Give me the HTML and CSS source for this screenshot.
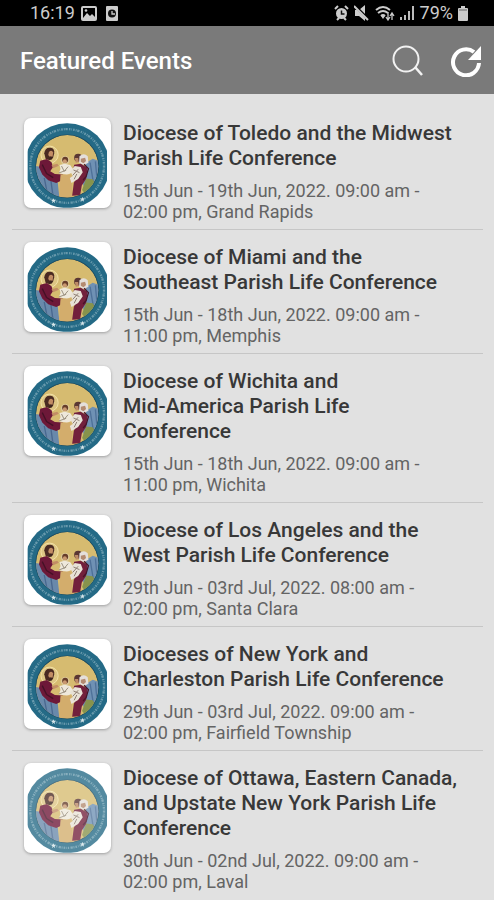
FILE: index.html
```html
<!DOCTYPE html>
<html lang="en">
<head>
<meta charset="utf-8">
<meta name="viewport" content="width=device-width, initial-scale=1">
<title>Featured Events</title>
<link rel="stylesheet" href="styles.css">
</head>
<body>
<svg class="defs" aria-hidden="true">
  <symbol id="seal" viewBox="27 24 262 270">
    <clipPath id="card"><rect x="38" y="24" width="239" height="270"/></clipPath>
    <clipPath id="disc"><circle cx="157" cy="169" r="94"/></clipPath>
    <g clip-path="url(#card)">
      <circle cx="157" cy="167" r="128" fill="#246a86"/>
      <circle cx="157" cy="168" r="111" fill="none" stroke="#a9c8d2" stroke-width="7" stroke-dasharray="5 3 3 2 7 4 4 3 2 3" opacity=".5"/>
      <circle cx="157" cy="169" r="96" fill="#1d4d62"/>
      <g clip-path="url(#disc)">
        <circle cx="157" cy="169" r="94" fill="#d6bb70"/>
        <path d="M62 168l22 4 20 24 24 16 6 55H80L55 220z" fill="#6989ab"/>
        <path d="M88 204l10 50M108 212l6 44" stroke="#49688f" stroke-width="4"/>
        <path d="M214 158l20-12 28 10v75l-44 30-14-40z" fill="#6f91b4"/>
        <path d="M226 158l10 60M242 154l4 44" stroke="#4f7199" stroke-width="4"/>
        <path d="M214 206l20 2 12 20-32 28-12-16z" fill="#87934c"/>
        <circle cx="104" cy="134" r="26" fill="#ddc684" stroke="#f3e2a8" stroke-width="3"/>
        <path d="M88 130q2-19 19-17 13 2 11 17l-4 15-10 6-12-5z" fill="#4a2a22"/>
        <path d="M102 126q8-8 13 1l-2 13-8 2-5-7z" fill="#c28d65"/>
        <path d="M104 139l9 1-3 9-7-1z" fill="#3d241d"/>
        <path d="M76 152l20-5 14 10 4 15-8 12 14 8 24 2-2 17-18 8-24-8-18-17-10-22z" fill="#6d1838"/>
        <path d="M82 164l13 27 20 12" fill="none" stroke="#451126" stroke-width="4"/>
        <path d="M110 166l17-5 5 6-17 8z" fill="#c28d65"/>
        <circle cx="151" cy="151" r="13" fill="#dcc998"/>
        <circle cx="151" cy="149" r="9" fill="#653c2a"/>
        <circle cx="150" cy="154" r="6" fill="#c99870"/>
        <path d="M134 165l15-4 17 4 8 12-6 13-12 5-24-5 5-13z" fill="#eee8db"/>
        <path d="M140 168l8 16 12-14m-28 19 22-8" fill="none" stroke="#9b9180" stroke-width="3"/>
        <path d="M137 194h32l5 70h-42z" fill="#d3ad6c"/>
        <circle cx="190" cy="143" r="12" fill="#5a3733"/>
        <path d="M180 144h10l2 12-9 2z" fill="#bd8b66"/>
        <path d="M194 139q13-12 25 0l2 19-14 8-14-8z" fill="#e4dfdb"/>
        <path d="M198 146l13-3 3 10-8 7-8-5z" fill="#b38a70"/>
        <path d="M178 164l20-3 20 12-4 34-13 20-5 29-24 2 5-39 10-22-14-8z" fill="#72203c"/>
        <path d="M166 184l14-16 18 3 6 16-14 20-20 12-5-15 9-6z" fill="#e8e2d7"/>
        <path d="M176 180l18 8m-20 8 16-18m-12 30 8-16" stroke="#8e7e72" stroke-width="3"/>
        <path d="M208 163l13 13-7 24-9 10" fill="none" stroke="#461328" stroke-width="4"/>
      </g>
      <path d="M116 265l2 5h6l-5 4 2 6-5-4-5 4 2-6-5-4h6zM203 261l2 5h6l-5 4 2 6-5-4-5 4 2-6-5-4h6z" fill="#d5e4e8"/>
    </g>
  </symbol>
</svg>

<div class="status">
  <span class="time">16:19</span>
  <svg class="s-photo" width="16" height="15" viewBox="0 0 16 15"><rect x="1" y="1" width="14" height="13" rx="1" fill="none" stroke="#ccc" stroke-width="2"/><path d="M2 12l4-5 3 3 2-2 4 4v2H2z" fill="#ccc"/><circle cx="5" cy="4.500" r="1.300" fill="#ccc"/></svg>
  <svg class="s-clock" width="12" height="15" viewBox="0 0 12 15"><rect width="12" height="15" rx="1" fill="#ccc"/><circle cx="6" cy="7.500" r="4" fill="#111"/><path d="M6 5v3h3" fill="none" stroke="#ccc" stroke-width="1.300"/></svg>
  <span class="spacer"></span>
  <svg width="15" height="16" viewBox="0 0 15 16"><path d="M1 4l3-3M14 4l-3-3M3 15l2-2M12 15l-2-2" stroke="#ccc" stroke-width="2"/><circle cx="7.500" cy="8.500" r="5.500" fill="#ccc"/><path d="M7.500 5.500v3.500h3" fill="none" stroke="#111" stroke-width="1.500"/></svg>
  <svg width="16" height="16" viewBox="0 0 16 16"><path d="M1 5h4l6-5v16l-6-5H1z" fill="#ccc"/><path d="M1 1l14 14" stroke="#000" stroke-width="3"/><path d="M0 1l14 14" stroke="#ccc" stroke-width="2"/></svg>
  <svg width="20" height="16" viewBox="0 0 20 16"><path d="M1 5q7-6 14 0M3 8q5-4 10 0M6 11q2-2 4 0" fill="none" stroke="#ccc" stroke-width="2"/><path d="M6 11h4l-2 3z" fill="#ccc"/><path d="M13 7v7m-2-2 2 3 2-3M17 15V9m-2 2 2-3 2 3" fill="none" stroke="#ccc" stroke-width="1.300"/></svg>
  <svg width="15" height="14" viewBox="0 0 15 14"><path d="M1 14v-3M5 14V9M9 14V5M13 14V0" stroke="#bbb" stroke-width="2"/></svg>
  <span class="pct">79%</span>
  <svg width="10" height="15" viewBox="0 0 10 15"><path d="M3 0h4v2h2q1 0 1 1v11q0 1-1 1H1q-1 0-1-1V3q0-1 1-1h2z" fill="#ccc"/><path d="M1 4h8" stroke="#666" stroke-width="1"/></svg>
</div>

<header class="bar">
  <h1>Featured Events</h1>
  <button type="button" aria-label="Search"><svg width="32" height="32" viewBox="0 0 32 32"><circle cx="14" cy="14" r="12.500" fill="none" stroke="#f2f2f2" stroke-width="2"/><path d="M23 22l7 8" stroke="#f2f2f2" stroke-width="2.500"/></svg></button>
  <button type="button" aria-label="Refresh"><svg width="32" height="32" viewBox="0 0 32 32"><path d="M29 18A13 13 0 1 1 24 7" fill="none" stroke="#fff" stroke-width="4"/><path d="M31 1v14H18z" fill="#fff"/></svg></button>
</header>

<main>
  <ul class="events">
    <li>
      <svg class="logo" role="img" aria-label="Seal"><use href="#seal"/></svg>
      <div><h2>Diocese of Toledo and the Midwest<br>Parish Life Conference</h2>
      <p>15th Jun - 19th Jun, 2022. 09:00 am -<br>02:00 pm, Grand Rapids</p></div>
    </li>
    <li>
      <svg class="logo" role="img" aria-label="Seal"><use href="#seal"/></svg>
      <div><h2>Diocese of Miami and the<br>Southeast Parish Life Conference</h2>
      <p>15th Jun - 18th Jun, 2022. 09:00 am -<br>11:00 pm, Memphis</p></div>
    </li>
    <li>
      <svg class="logo" role="img" aria-label="Seal"><use href="#seal"/></svg>
      <div><h2>Diocese of Wichita and<br>Mid-America Parish Life<br>Conference</h2>
      <p>15th Jun - 18th Jun, 2022. 09:00 am -<br>11:00 pm, Wichita</p></div>
    </li>
    <li>
      <svg class="logo" role="img" aria-label="Seal"><use href="#seal"/></svg>
      <div><h2>Diocese of Los Angeles and the<br>West Parish Life Conference</h2>
      <p>29th Jun - 03rd Jul, 2022. 08:00 am -<br>02:00 pm, Santa Clara</p></div>
    </li>
    <li>
      <svg class="logo" role="img" aria-label="Seal"><use href="#seal"/></svg>
      <div><h2>Dioceses of New York and<br>Charleston Parish Life Conference</h2>
      <p>29th Jun - 03rd Jul, 2022. 09:00 am -<br>02:00 pm, Fairfield Township</p></div>
    </li>
    <li>
      <svg class="logo loading" role="img" aria-label="Seal"><use href="#seal"/></svg>
      <div><h2>Diocese of Ottawa, Eastern Canada,<br>and Upstate New York Parish Life<br>Conference</h2>
      <p>30th Jun - 02nd Jul, 2022. 09:00 am -<br>02:00 pm, Laval</p></div>
    </li>
  </ul>
</main>
</body>
</html>
```
FILE: styles.css
```css
* { box-sizing: border-box; }
body {
  margin: 0;
  background: #e1e1e1;
  color: #383838;
  font-family: Roboto, "Liberation Sans", sans-serif;
}
h1, h2, p, ul { margin: 0; padding: 0; }
.defs { position: absolute; width: 0; height: 0; }

.status {
  display: flex;
  align-items: center;
  gap: 5px;
  height: 26px;
  padding: 0 26px 0 30px;
  background: #000;
  color: #ccc;
  font-size: 18px;
  line-height: 26px;
}
.time { margin-right: 1px; }
.s-clock { margin-left: 4px; }
.spacer { flex: 1; }

.bar {
  display: flex;
  align-items: center;
  gap: 26px;
  height: 68px;
  padding: 2px 12px 0 20px;
  background: #7a7a7a;
  color: #fff;
}
.bar h1 {
  flex: 1;
  font-size: 24px;
  font-weight: 500;
}
.bar button {
  display: flex;
  padding: 0;
  border: 0;
  background: none;
}

.events {
  padding: 12px 11px 0 12px;
  list-style: none;
}
.events li {
  display: flex;
  align-items: flex-start;
  gap: 12px;
  padding: 12px 0 7px 12px;
  border-bottom: 1px solid #c6c6c6;
}
.events li:last-child { border-bottom: 0; }
.logo {
  flex: none;
  width: 87px;
  height: 90px;
  border-radius: 7px;
  background: #fff;
  box-shadow: 0 1px 3px rgba(0, 0, 0, .3);
}
.loading use { opacity: .78; }
.events div {
  flex: 1;
  padding-top: 3px;
  white-space: nowrap;
}
h2 {
  font-size: 21px;
  font-weight: 500;
  line-height: 25px;
}
p {
  margin-top: 9px;
  color: #646464;
  font-size: 18px;
  line-height: 21px;
}
```
